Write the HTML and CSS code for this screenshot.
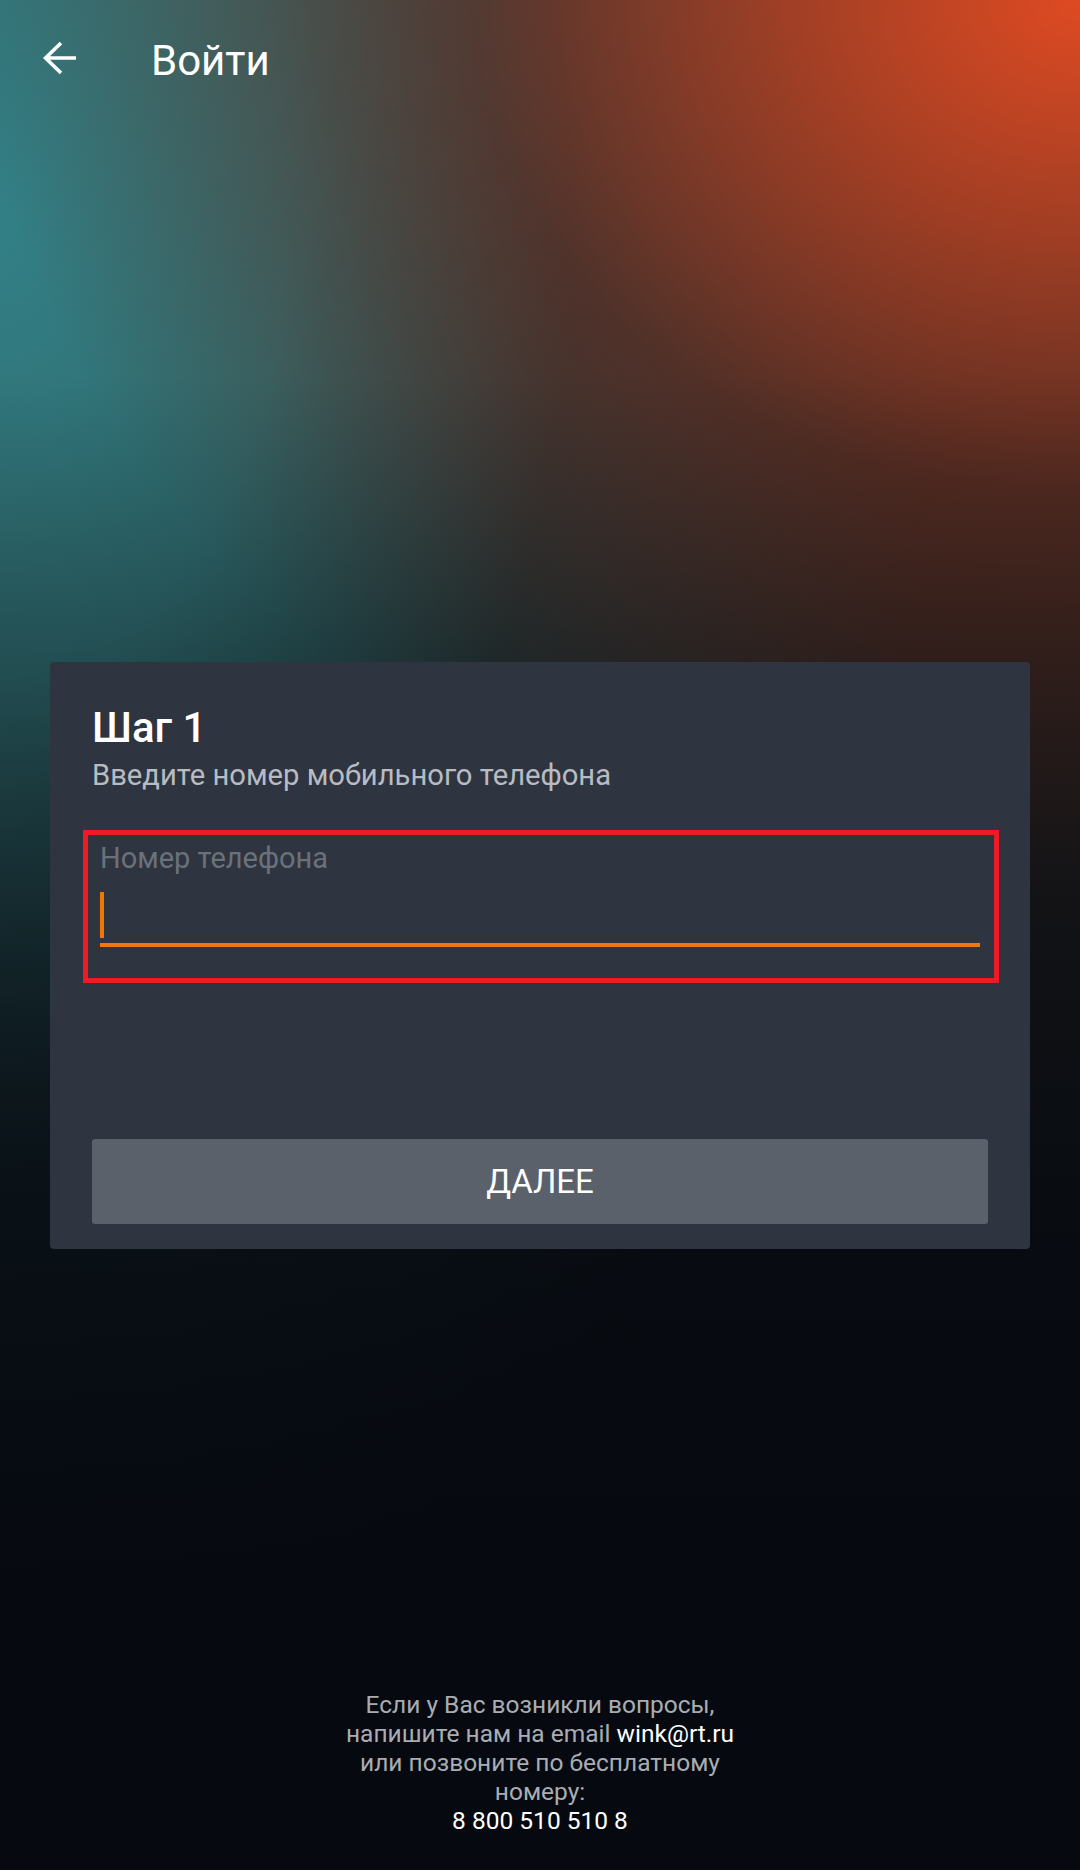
FILE: index.html
```html
<!DOCTYPE html>
<html lang="ru">
<head>
<meta charset="utf-8">
<title>Войти</title>
<link rel="stylesheet" href="styles.css">
</head>
<body>
<div class="page">
  <header class="topbar">
    <svg class="back" width="34" height="34" viewBox="0 0 34 34" aria-hidden="true">
      <path d="M33 17 H2.5 M18 2 L2.5 17 L18 32" fill="none" stroke="#ffffff" stroke-width="3.6" stroke-linecap="butt" stroke-linejoin="miter"/>
    </svg>
    <h1 class="topbar-title">Войти</h1>
  </header>

  <section class="card">
    <h2 class="card-title">Шаг 1</h2>
    <p class="card-sub">Введите номер мобильного телефона</p>

    <div class="field">
      <div class="field-label">Номер телефона</div>
      <div class="field-input">
        <span class="cursor"></span>
      </div>
      <div class="field-line"></div>
    </div>

    <button class="btn" type="button">ДАЛЕЕ</button>
  </section>

  <footer class="help">
    <p>Если у Вас возникли вопросы,<br>
    напишите нам на email <span class="hl">wink@rt.ru</span><br>
    или позвоните по бесплатному<br>
    номеру:<br>
    <span class="hl">8 800 510 510 8</span></p>
  </footer>
</div>
</body>
</html>
```

FILE: styles.css
```css
* { box-sizing: border-box; }

html, body {
  margin: 0;
  padding: 0;
  background: #060a10;
}

body {
  font-family: Roboto, "Noto Sans", "Liberation Sans", sans-serif;
  color: #ffffff;
}

.page {
  width: 1080px;
  height: 1870px;
  display: flex;
  flex-direction: column;
  background-color: #060a10;
  background-image:
    linear-gradient(180deg, rgba(6,10,16,0) 0%, rgba(6,10,16,0) 20%, rgba(6,10,16,0.45) 45%, rgba(6,10,16,0.8) 65%, rgba(6,10,16,0.97) 85%, #060a10 100%),
    radial-gradient(ellipse 1100px 900px at 100% 0%, rgba(222,74,34,1) 0%, rgba(180,62,32,0.85) 25%, rgba(110,40,26,0.55) 55%, rgba(50,24,22,0) 100%),
    radial-gradient(ellipse 950px 1500px at 0% 12%, rgba(50,128,134,1) 0%, rgba(46,114,118,0.88) 30%, rgba(24,66,72,0.55) 60%, rgba(12,30,38,0) 100%),
    linear-gradient(180deg, #4d4a42 0%, #2a2420 35%, #101216 70%, #060a10 100%);
}

/* Header */
.topbar {
  display: flex;
  align-items: flex-start;
  padding: 36px 0 0 43px;
}

.back {
  display: block;
  margin-top: 5px;
  flex: none;
}

.topbar-title {
  margin: 0 0 0 74px;
  font-size: 42px;
  font-weight: 400;
  line-height: normal;
  color: #ffffff;
}

/* Card */
.card {
  margin: 577px 0 0 50px;
  width: 980px;
  height: 587px;
  padding: 41px 42px 25px;
  background: #2e3540;
  border-radius: 4px;
  display: flex;
  flex-direction: column;
}

.card-title {
  margin: 0;
  font-size: 42px;
  font-weight: 500;
  line-height: normal;
  color: #ffffff;
}

.card-sub {
  margin: 6px 0 0;
  font-size: 29.2px;
  font-weight: 400;
  line-height: normal;
  color: #b8bcc2;
}

/* Phone field (highlighted) */
.field {
  margin: 38px -11px 0 -9px;
  border: 5px solid #ed1c24;
  padding: 6px 14px 31px 12px;
}

.field-label {
  font-size: 29px;
  line-height: normal;
  color: #6b717a;
}

.field-input {
  margin-top: 17px;
  height: 46px;
  display: flex;
}

.cursor {
  display: block;
  width: 4px;
  height: 46px;
  background: #f07800;
}

.field-line {
  margin-top: 5px;
  height: 4px;
  background: #ec7a0e;
}

/* Button */
.btn {
  margin-top: auto;
  height: 85px;
  width: 100%;
  border: 0;
  border-radius: 3px;
  background: #5a616b;
  color: #ffffff;
  font-family: Roboto, "Noto Sans", "Liberation Sans", sans-serif;
  font-size: 33px;
  font-weight: 400;
  display: flex;
  align-items: center;
  justify-content: center;
  padding: 0;
}

/* Footer */
.help {
  margin-top: auto;
  padding-bottom: 35px;
  text-align: center;
}

.help p {
  margin: 0;
  font-size: 24.5px;
  line-height: 29px;
  color: #a9adb3;
}

.help .hl {
  color: #ffffff;
}
```
